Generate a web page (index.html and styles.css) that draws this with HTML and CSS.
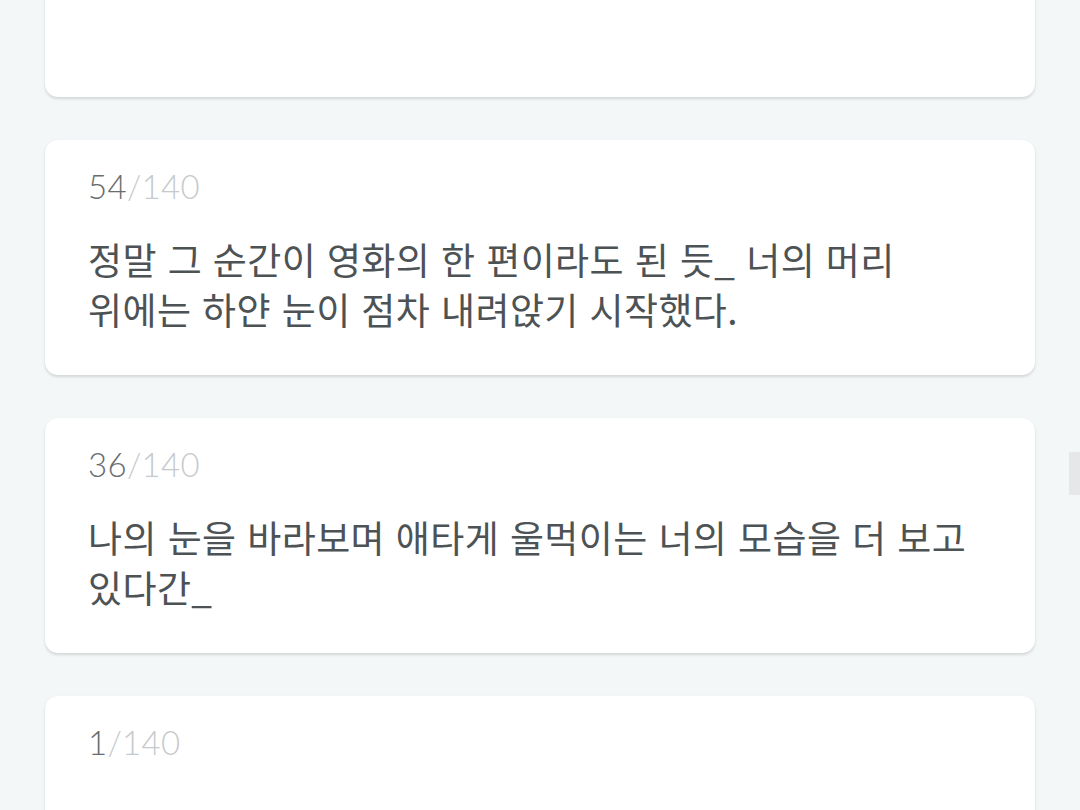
FILE: index.html
```html
<!DOCTYPE html>
<html lang="ko">
<head>
<meta charset="utf-8">
<title>Notes</title>
<link rel="stylesheet" href="styles.css">
</head>
<body>
<main class="list">
  <section class="card"></section>
  <section class="card">
    <div class="counter"><span class="count">54</span><span class="max">/140</span></div>
    <p class="text">정말 그 순간이 영화의 한 편이라도 된 듯_ 너의 머리 위에는 하얀 눈이 점차 내려앉기 시작했다.</p>
  </section>
  <section class="card">
    <div class="counter"><span class="count">36</span><span class="max">/140</span></div>
    <p class="text">나의 눈을 바라보며 애타게 울먹이는 너의 모습을 더 보고 있다간_</p>
  </section>
  <section class="card">
    <div class="counter"><span class="count">1</span><span class="max">/140</span></div>
  </section>
</main>
<div class="scroll-thumb"></div>
</body>
</html>
```
FILE: styles.css
```css
html, body {
  margin: 0;
  padding: 0;
  background: #f4f7f8;
  overflow: hidden;
  height: 810px;
}
.list {
  display: flex;
  flex-direction: column;
  gap: 43px;
  padding: 0 45px;
  margin-top: -138px;
}
.card {
  background: #ffffff;
  border-radius: 13px;
  box-shadow: 0 2px 3px rgba(0, 0, 0, 0.13), 0 0 1px rgba(0, 0, 0, 0.06);
  padding: 28px 43px 41px;
  height: 235px;
  box-sizing: border-box;
}
.counter {
  font-family: Lato, "Open Sans", sans-serif;
  font-weight: 300;
  font-size: 33px;
  line-height: 37px;
  letter-spacing: 0.3px;
}
.count { color: #676c6f; }
.max { color: #c6cacd; }
.text {
  margin: 29px 0 0;
  font-family: "Noto Sans CJK KR", "Noto Sans", sans-serif;
  font-size: 37px;
  line-height: 50px;
  letter-spacing: 0.4px;
  word-break: keep-all;
  color: #4d5255;
}
.scroll-thumb {
  position: fixed;
  right: 0;
  top: 452px;
  width: 11px;
  height: 43px;
  background: #e6e7e8;
}
```
